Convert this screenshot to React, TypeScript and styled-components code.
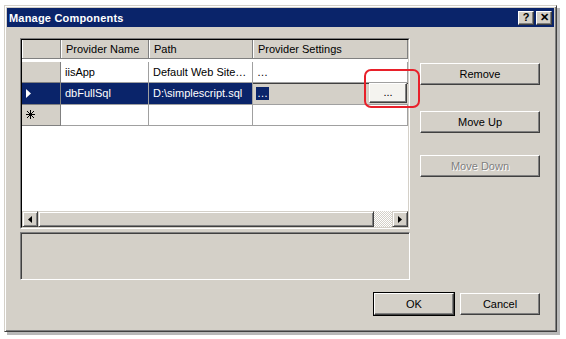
import React from "react"
import styled, { createGlobalStyle, css } from "styled-components"

const GlobalStyle = createGlobalStyle`
	body{
		margin: 0;
		background: #fff;
		font-family: "Liberation Sans", Arial, sans-serif;
		font-size: 11px;
	}
`

const face = "#d4d0c8"
const navy = "#0a246a"

const raised = css`
	border-top: 1px solid #fff;
	border-left: 1px solid #fff;
	border-right: 1px solid #404040;
	border-bottom: 1px solid #404040;
	box-shadow: inset -1px -1px 0 #808080;
`

const Page = styled.div`
	width: 566px;
	height: 339px;
	padding: 5px 0 0 4px;
	box-sizing: border-box;
	overflow: hidden;
`

const Window = styled.div`
	box-sizing: border-box;
	width: 553px;
	height: 327px;
	background: ${face};
	border-top: 1px solid ${face};
	border-left: 1px solid ${face};
	border-right: 1px solid #404040;
	border-bottom: 1px solid #404040;
	box-shadow: inset 1px 1px 0 #fff, inset -1px -1px 0 #808080, 3px 3px 0 #b8b8b8;
	padding: 2px;
	display: flex;
	flex-direction: column;
`

const TitleBar = styled.div`
	height: 19px;
	background: ${navy};
	display: flex;
	align-items: center;
	padding: 0 2px 0 2px;
`

const Title = styled.div`
	flex: 1;
	color: #fff;
	font-weight: bold;
	font-size: 11px;
	letter-spacing: 0.2px;
`

const CaptionButton = styled.div`
	box-sizing: border-box;
	width: 16px;
	height: 14px;
	background: ${face};
	${raised};
	display: flex;
	align-items: center;
	justify-content: center;
	font-weight: bold;
	font-size: 11px;
	color: #000;
	margin-left: 2px;
	line-height: 1;
`

const Body = styled.div`
	flex: 1;
	display: flex;
	flex-direction: column;
	padding: 11px 14px 0 13px;
`

const Main = styled.div`
	display: flex;
	gap: 10px;
`

const LeftCol = styled.div`
	display: flex;
	flex-direction: column;
	gap: 3px;
	width: 392px;
`

const GridBox = styled.div`
	position: relative;
	box-sizing: border-box;
	height: 191px;
	background: #fff;
	border-top: 1px solid #808080;
	border-left: 1px solid #808080;
	border-right: 1px solid #fff;
	border-bottom: 1px solid #fff;
	display: flex;
	flex-direction: column;
`

const GridInner = styled.div`
	flex: 1;
	border-top: 1px solid #000;
	border-left: 1px solid #000;
	border-right: 1px solid ${face};
	border-bottom: 1px solid ${face};
	display: flex;
	flex-direction: column;
	overflow: hidden;
`

const Rows = styled.div`
	flex: 1;
	display: grid;
	grid-template-columns: 39px 88px 104px 1fr;
	grid-auto-rows: 21.5px;
	align-content: start;
`

const HeaderCell = styled.div`
	height: 18px;
	background: ${face};
	border-right: 1px solid #808080;
	border-bottom: 1px solid #808080;
	box-shadow: inset 1px 0 0 #fff;
	display: flex;
	align-items: center;
	padding-left: 5px;
	color: #000;
	white-space: nowrap;
	overflow: hidden;
`

const RowHead = styled.div<{ $selected?: boolean }>`
	background: ${(p) => (p.$selected ? navy : face)};
	border-right: 1px solid #808080;
	border-bottom: 1px solid #808080;
	display: flex;
	align-items: center;
	padding-left: 4px;
	color: ${(p) => (p.$selected ? "#fff" : "#000")};
`

const Cell = styled.div<{ $selected?: boolean }>`
	background: ${(p) => (p.$selected ? navy : "#fff")};
	color: ${(p) => (p.$selected ? "#fff" : "#000")};
	border-right: 1px solid #a0a0a0;
	border-bottom: 1px solid #a0a0a0;
	display: flex;
	align-items: center;
	padding-left: 4px;
	white-space: nowrap;
	overflow: hidden;
`

const EditCell = styled.div`
	background: ${face};
	border-bottom: 1px solid #a0a0a0;
	box-shadow: inset 0 1px 0 #404040;
	display: flex;
	align-items: center;
	padding-left: 3px;
	padding-right: 1px;
	gap: 4px;
`

const Highlight = styled.span`
	background: ${navy};
	color: #fff;
	padding: 0 1px;
	line-height: 13px;
`

const Spacer = styled.div`
	flex: 1;
`

const EllipsisButton = styled.div`
	box-sizing: border-box;
	width: 38px;
	height: 20px;
	background: #f4f3ef;
	${raised};
	display: flex;
	align-items: center;
	justify-content: center;
	padding-bottom: 3px;
`

const HScroll = styled.div`
	height: 16px;
	display: flex;
`

const ArrowBtn = styled.div`
	box-sizing: border-box;
	width: 16px;
	height: 16px;
	background: ${face};
	border-top: 1px solid ${face};
	border-left: 1px solid ${face};
	border-right: 1px solid #404040;
	border-bottom: 1px solid #404040;
	box-shadow: inset 1px 1px 0 #fff, inset -1px -1px 0 #808080;
	display: flex;
	align-items: center;
	justify-content: center;
`

const Thumb = styled(ArrowBtn)`
	width: auto;
	flex: 1;
`

const Track = styled.div`
	width: 18px;
	background: repeating-conic-gradient(#fff 0 25%, ${face} 0 50%) 0 0 / 2px 2px;
`

const Annotation = styled.div`
	position: absolute;
	left: 343px;
	top: 30px;
	width: 52px;
	height: 35px;
	border: 2px solid #e8202a;
	border-radius: 7px;
	pointer-events: none;
`

const DescBox = styled.div`
	box-sizing: border-box;
	height: 48px;
	border-top: 1px solid #808080;
	border-left: 1px solid #808080;
	border-right: 1px solid #fff;
	border-bottom: 1px solid #fff;
	box-shadow: inset 1px 1px 0 #404040;
`

const RightCol = styled.div`
	display: flex;
	flex-direction: column;
	padding-top: 25px;
`

const Button = styled.div<{ $disabled?: boolean; $default?: boolean; $gap?: number }>`
	box-sizing: border-box;
	width: ${(p) => (p.$default !== undefined ? "80px" : "120px")};
	height: 22px;
	margin-top: ${(p) => p.$gap ?? 0}px;
	background: ${face};
	${raised};
	display: flex;
	align-items: center;
	justify-content: center;
	color: ${(p) => (p.$disabled ? "#808080" : "#000")};
	text-shadow: ${(p) => (p.$disabled ? "1px 1px 0 #fff" : "none")};
	${(p) =>
		p.$default &&
		css`
			outline: 1px solid #000;
			outline-offset: 0;
		`}
`

const Footer = styled.div`
	display: flex;
	justify-content: flex-end;
	gap: 6px;
	padding: 13px 0 0 0;
`

const TriRight = ({ color = "#000", w = 4, h = 7 }: { color?: string; w?: number; h?: number }) => (
	<svg width={w} height={h} viewBox={`0 0 ${w} ${h}`}>
		<path d={`M0 0 L${w} ${h / 2} L0 ${h} Z`} fill={color} />
	</svg>
)

const TriLeft = () => (
	<svg width="4" height="7" viewBox="0 0 4 7">
		<path d="M4 0 L0 3.5 L4 7 Z" fill="#000" />
	</svg>
)

const Star = () => (
	<svg width="9" height="9" viewBox="0 0 9 9">
		<path d="M4.5 0 V9 M0 4.5 H9 M1 1 L8 8 M8 1 L1 8" stroke="#000" strokeWidth="1" />
	</svg>
)

export default function App() {
	return (
		<>
			<GlobalStyle />
			<Page>
				<Window>
					<TitleBar>
						<Title>Manage Components</Title>
						<CaptionButton>?</CaptionButton>
						<CaptionButton>✕</CaptionButton>
					</TitleBar>
					<Body>
						<Main>
							<LeftCol>
								<GridBox>
									<GridInner>
										<Rows>
											<HeaderCell />
											<HeaderCell>Provider Name</HeaderCell>
											<HeaderCell>Path</HeaderCell>
											<HeaderCell>Provider Settings</HeaderCell>

											<RowHead />
											<Cell>iisApp</Cell>
											<Cell>Default Web Site…</Cell>
											<Cell>…</Cell>

											<RowHead $selected>
												<TriRight color="#fff" w={5} h={9} />
											</RowHead>
											<Cell $selected>dbFullSql</Cell>
											<Cell $selected>D:\simplescript.sql</Cell>
											<EditCell>
												<Highlight>…</Highlight>
												<Spacer />
												<EllipsisButton>...</EllipsisButton>
											</EditCell>

											<RowHead>
												<Star />
											</RowHead>
											<Cell />
											<Cell />
											<Cell />
										</Rows>
										<HScroll>
											<ArrowBtn>
												<TriLeft />
											</ArrowBtn>
											<Thumb />
											<Track />
											<ArrowBtn>
												<TriRight />
											</ArrowBtn>
										</HScroll>
									</GridInner>
									<Annotation />
								</GridBox>
								<DescBox />
							</LeftCol>
							<RightCol>
								<Button>Remove</Button>
								<Button $gap={26}>Move Up</Button>
								<Button $gap={22} $disabled>
									Move Down
								</Button>
							</RightCol>
						</Main>
						<Footer>
							<Button $default>OK</Button>
							<Button $default={false}>Cancel</Button>
						</Footer>
					</Body>
				</Window>
			</Page>
		</>
	)
}
